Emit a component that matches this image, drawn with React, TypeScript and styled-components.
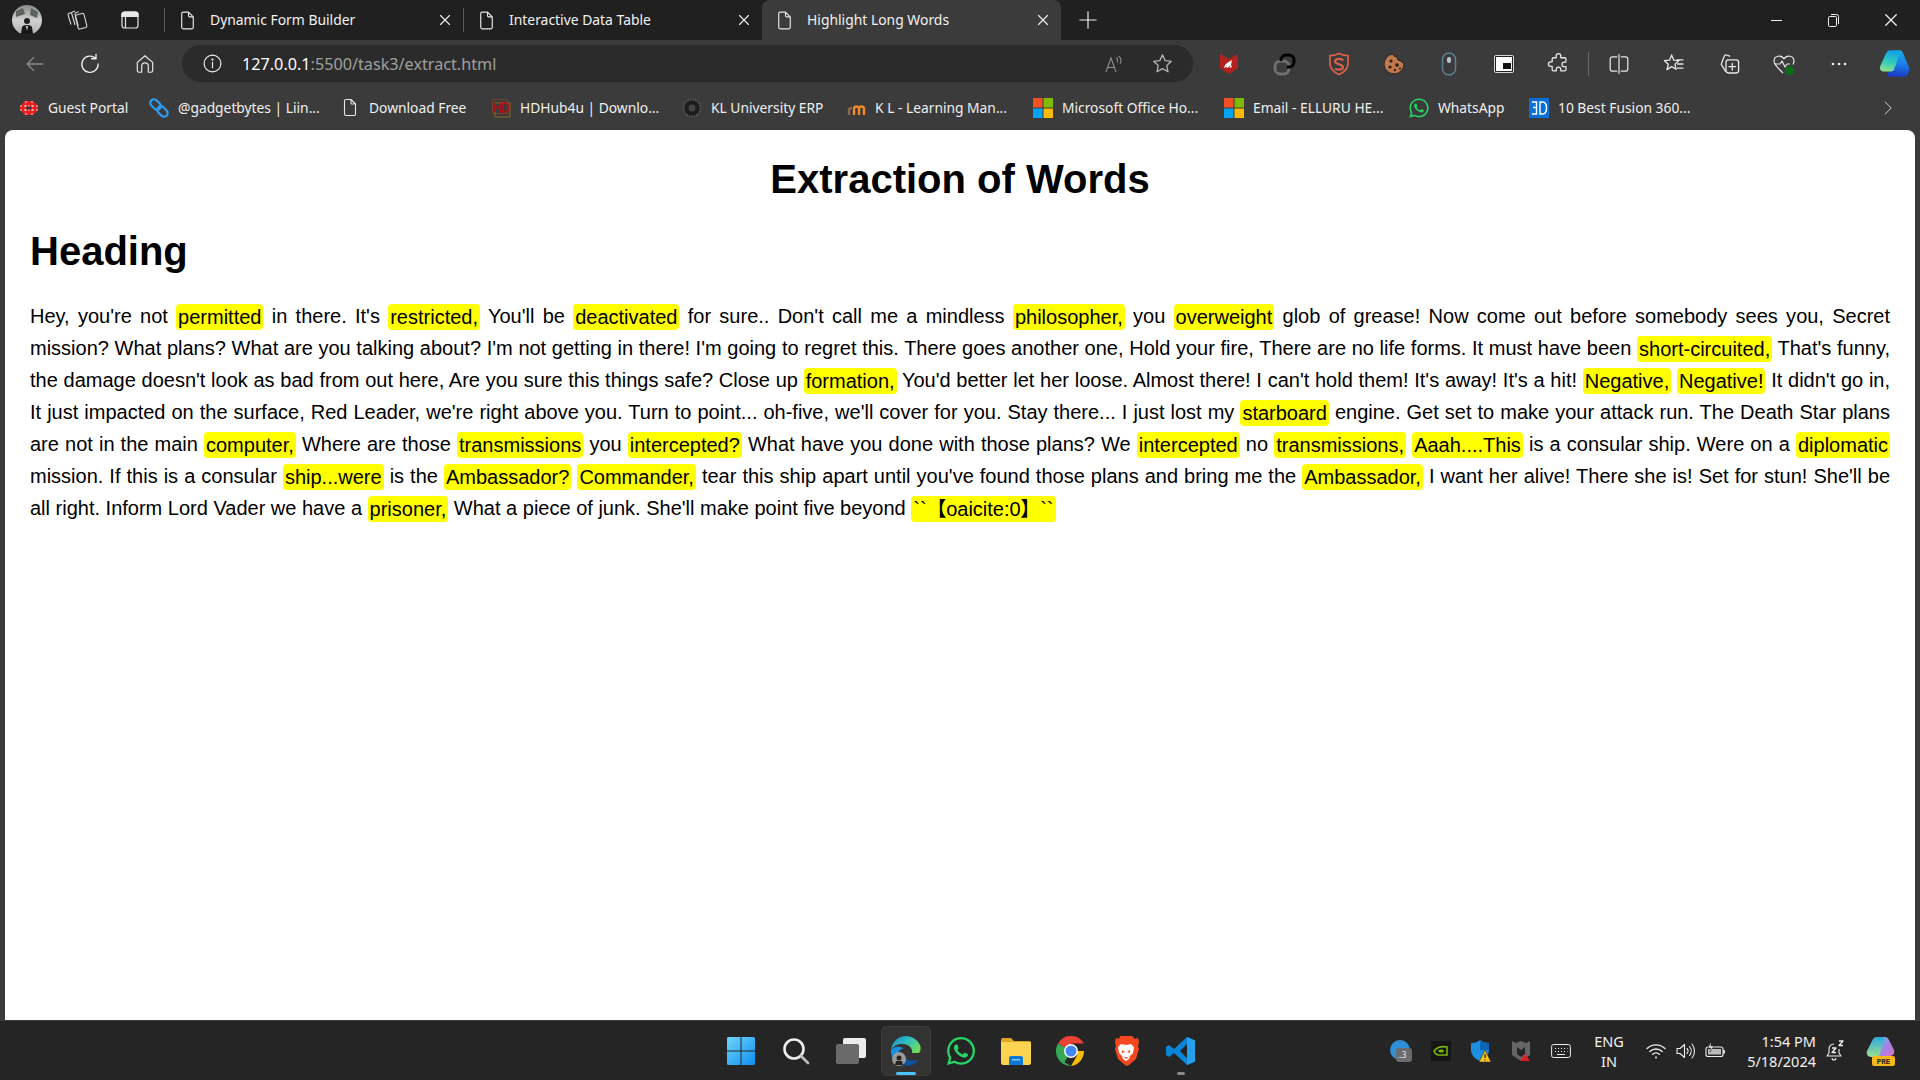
import React from "react";
import styled, { createGlobalStyle } from "styled-components";
import { FaWhatsapp } from "react-icons/fa";

const Global = createGlobalStyle`
  html, body { margin: 0; padding: 0; background: #3b3b3b; }
  #root { width: 1920px; height: 1080px; overflow: hidden; }
`;

const Screen = styled.div`
  display: flex;
  flex-direction: column;
  width: 1920px;
  height: 1080px;
  background: #3b3b3b;
  font-family: "Noto Sans", "Open Sans", sans-serif;
  color: #fff;
`;

const TitleBar = styled.div`
  display: flex;
  align-items: stretch;
  height: 40px;
  background: #202020;
  flex: none;
`;

const Slot = styled.div<{ $w: number }>`
  display: flex;
  align-items: center;
  justify-content: center;
  flex: none;
  width: ${(p) => p.$w}px;
`;

const Divider = styled.div`
  flex: none;
  width: 1px;
  height: 24px;
  margin: 8px 0 0;
  background: #5c5c5c;
`;

const Tab = styled.div<{ $active?: boolean; $w: number }>`
  display: flex;
  align-items: center;
  flex: none;
  width: ${(p) => p.$w}px;
  height: 40px;
  padding: 0 12px;
  box-sizing: border-box;
  background: ${(p) => (p.$active ? "#3b3b3b" : "transparent")};
  border-radius: ${(p) => (p.$active ? "8px 8px 0 0" : "0")};
`;

const TabTitle = styled.span`
  flex: 1;
  margin: 0 0 2px 12px;
  font-size: 13.9px;
  white-space: nowrap;
  color: #f2f2f2;
`;

const Spacer = styled.div`
  flex: 1;
`;

const Toolbar = styled.div`
  display: flex;
  align-items: center;
  flex: none;
  height: 43px;
  padding: 4px 0 0 7px;
  box-sizing: border-box;
`;

const AddressBar = styled.div`
  display: flex;
  align-items: center;
  flex: none;
  width: 1011px;
  height: 37px;
  margin: 0 8px 0 10px;
  padding: 0 6px 0 20px;
  box-sizing: border-box;
  border-radius: 19px;
  background: #2b2b2b;
`;

const Url = styled.div`
  flex: 1;
  margin-left: 19px;
  font-size: 16.2px;
  white-space: nowrap;
  color: #a0a0a0;
`;

const UrlHost = styled.span`
  color: #ffffff;
`;

const ToolSep = styled.div`
  flex: none;
  width: 1px;
  height: 24px;
  margin: 0 2px;
  background: #6a6a6a;
`;

const BookmarkBar = styled.div`
  display: flex;
  align-items: center;
  flex: none;
  height: 47px;
  padding: 2px 0 0 19px;
  box-sizing: border-box;
`;

const Bookmark = styled.div<{ $w: number }>`
  display: flex;
  align-items: center;
  flex: none;
  width: ${(p) => p.$w}px;
  gap: 9px;
  font-size: 13.8px;
  white-space: nowrap;
  color: #f0f0f0;
`;

const BookmarkIcon = styled.div`
  display: flex;
  align-items: center;
  justify-content: center;
  flex: none;
  width: 20px;
  height: 20px;
`;

const Page = styled.main`
  flex: 1;
  min-height: 0;
  margin: 0 5px;
  padding: 26px 25px 0;
  box-sizing: border-box;
  background: #ffffff;
  border-radius: 8px 8px 0 0;
  color: #000;
  font-family: "Liberation Sans", "Noto Sans CJK SC", Arial, sans-serif;
`;

const Title = styled.h1`
  margin: 0 0 26px;
  font-size: 40px;
  line-height: 46px;
  font-weight: 700;
  text-align: center;
`;

const Heading = styled.h2`
  margin: 0 0 26px;
  font-size: 40px;
  line-height: 46px;
  font-weight: 700;
`;

const Body = styled.p`
  margin: 0;
  font-size: 20px;
  line-height: 32px;
  text-align: justify;
`;

const Mark = styled.span`
  padding: 2px;
  background: #ffff00;
  border-radius: 4px;
  line-height: 20px;
  vertical-align: -1px;
  word-spacing: 4px;
  font-feature-settings: "palt";
`;

const Taskbar = styled.footer`
  display: grid;
  grid-template-columns: 1fr auto 1fr;
  flex: none;
  height: 60px;
  background: #252525;
  border-top: 1px solid #3a3a3a;
  box-sizing: border-box;
`;

const TaskCenter = styled.div`
  display: flex;
  align-items: center;
  padding-left: 2px;
`;

const TaskButton = styled.div<{ $active?: boolean }>`
  position: relative;
  display: flex;
  align-items: center;
  justify-content: center;
  flex: none;
  width: 55px;
  height: 50px;
  &::before {
    content: "";
    position: absolute;
    inset: 0 2.5px;
    border-radius: 5px;
    background: ${(p) => (p.$active ? "#333333" : "transparent")};
    border: ${(p) => (p.$active ? "1px solid #3d3d3d" : "none")};
  }
  & > svg {
    position: relative;
  }
`;

const RunDot = styled.div<{ $active?: boolean }>`
  position: absolute;
  left: 50%;
  bottom: 1px;
  width: ${(p) => (p.$active ? 20 : 8)}px;
  height: 3px;
  margin-left: ${(p) => (p.$active ? -10 : -4)}px;
  border-radius: 2px;
  background: ${(p) => (p.$active ? "#4cc2ff" : "#8a8a8a")};
`;

const Tray = styled.div`
  display: flex;
  align-items: center;
  justify-content: flex-end;
  padding-right: 12px;
`;

const Lang = styled.div`
  flex: none;
  width: 56px;
  margin-right: 4px;
  font-size: 14.5px;
  line-height: 20px;
  text-align: center;
  color: #f2f2f2;
`;

const Clock = styled.div`
  flex: none;
  width: 89px;
  padding-right: 4px;
  box-sizing: border-box;
  font-size: 14.5px;
  line-height: 20px;
  text-align: right;
  white-space: nowrap;
  color: #f2f2f2;
`;

type IconProps = { s?: number; c?: string; o?: number };

const Line = ({ s = 20, c = "#fff", o = 1, children }: IconProps & { children: React.ReactNode }) => (
  <svg width={s} height={s} viewBox="0 0 20 20" fill="none" stroke={c} strokeOpacity={o} strokeWidth={1.1} strokeLinecap="round" strokeLinejoin="round">
    {children}
  </svg>
);

const PageIcon = ({ c = "#e8e8e8" }: IconProps) => (
  <Line s={21} c={c}>
    <path d="M4.5 3.5a1.5 1.5 0 0 1 1.5-1.5h5l4.5 4.5v10a1.5 1.5 0 0 1-1.5 1.5H6a1.5 1.5 0 0 1-1.5-1.5zM11 2v3.5a1 1 0 0 0 1 1h3.5" />
  </Line>
);
const CloseIcon = ({ s = 12, c = "#f0f0f0" }: IconProps) => (
  <svg width={s} height={s} viewBox="0 0 12 12" stroke={c} strokeWidth={1.1} strokeLinecap="round"><path d="M1.5 1.5l9 9M10.5 1.5l-9 9" /></svg>
);
const Avatar = () => (
  <svg width={30} height={30} viewBox="0 0 30 30">
    <defs><linearGradient id="av" x1="0" y1="0" x2="0" y2="1"><stop offset="0" stopColor="#858a87" /><stop offset="0.5" stopColor="#d0d2d0" /><stop offset="1" stopColor="#b0b0b0" /></linearGradient></defs>
    <circle cx="15" cy="15" r="15" fill="url(#av)" />
    <path d="M4 6l7-3 2 6-9 3zM19 3l7 4-1 6-7-3z" fill="#5c625e" />
    <circle cx="15" cy="16" r="3" fill="#1f1f1f" />
    <path d="M9 29l1-7q1-2 5-2t5 2l1 7q-6 2-12 0z" fill="#161616" />
    <path d="M14 21h2l-1 5z" fill="#ddd" />
  </svg>
);
const Workspaces = () => (
  <svg width={22} height={22} viewBox="0 0 22 22" fill="none" stroke="#d8d8d8" strokeWidth={1.1} strokeLinejoin="round">
    <path d="M5.500 3.500L2.800 4.600a1.200 1.200 0 0 0-.7 1.500L5 15.500" />
    <path d="M9 2L6.400 3a1.200 1.200 0 0 0-.7 1.500l3.300 11.500" />
    <path d="M12.800 2.800l-2.900.9a1.200 1.200 0 0 0-.8 1.500l3.100 11.800" />
    <rect x="10.500" y="5" width="9" height="14.500" rx="1.500" transform="rotate(-14 15 12)" />
  </svg>
);
const TabsIcon = () => (
  <svg width={20} height={20} viewBox="0 0 20 20" fill="none" stroke="#e8e8e8" strokeWidth={1.2}>
    <rect x="2" y="2" width="16" height="16" rx="2.5" />
    <path d="M2 6.500V4.500A2.500 2.500 0 0 1 4.500 2h11A2.500 2.500 0 0 1 18 4.500v2z" fill="#e8e8e8" />
    <path d="M5.500 6.500V18" />
  </svg>
);
const Minus = () => <svg width={12} height={12} viewBox="0 0 12 12" stroke="#eee"><path d="M0 6.500h11" /></svg>;
const Restore = () => (
  <svg width={14} height={14} viewBox="0 0 14 14" fill="none" stroke="#eee"><rect x="2.500" y="3.500" width="8" height="10" rx="1.200" /><path d="M5 1.500h5.500a2 2 0 0 1 2 2V11" /></svg>
);
const PlusIcon = () => (
  <svg width={20} height={20} viewBox="0 0 20 20" stroke="#eee" strokeWidth={1.2}><path d="M10 1.500v17M1.500 10h17" /></svg>
);
const Back = () => (
  <Line s={24} c="#8a8a8a"><path d="M16.500 10H3.500M9 4.500L3.500 10 9 15.500" /></Line>
);
const Reload = () => (
  <Line s={24} c="#eee"><path d="M14.600 5.200A6.800 6.800 0 1 0 16.800 10M15 2v3.600h-3.600" /></Line>
);
const HomeIcon = () => (
  <Line s={22} c="#e6e6e6"><path d="M3 8.500L10 2.500l7 6V16a1.500 1.500 0 0 1-1.500 1.500H13V12a3 3 0 0 0-6 0v5.500H4.500A1.500 1.500 0 0 1 3 16z" /></Line>
);
const InfoIcon = () => (
  <Line s={21} c="#f0f0f0"><circle cx="10" cy="10" r="8" /><path d="M10 9v5" /><circle cx="10" cy="6.300" r="0.500" fill="#f0f0f0" /></Line>
);
const ReadAloud = () => (
  <svg width={22} height={22} viewBox="0 0 22 22" fill="none" stroke="#8e8e8e" strokeWidth={1.1}>
    <path d="M3 19l5-14 5 14M5 14.500h6" /><path d="M13 4.500c2 1 2 3.500 1 5M15.500 3c3 1.500 3 6 1.500 8" />
  </svg>
);
const StarIcon = () => (
  <Line s={23} c="#b5b5b5"><path d="M10 2.500l2.300 5 5.400.6-4 3.700 1.100 5.400L10 14.500l-4.800 2.700 1.100-5.400-4-3.700 5.400-.6z" /></Line>
);
const ShieldRed = () => (
  <svg width={18} height={22} viewBox="0 0 18 22">
    <path d="M0 1l4.500 2.500L9 6l4.500-2.500L18 1v14l-9 6-9-6z" fill="#b3221e" />
    <path d="M6 14l1-4 5-3-1 5-4 3zM5 12l2-2-1 4-2 1zM11 12l1 2-3 1z" fill="#fff" />
  </svg>
);
const LinkExt = () => (
  <svg width={24} height={24} viewBox="0 0 24 24" fill="none" strokeWidth={3}>
    <rect x="3" y="9" width="14" height="13" rx="5.500" stroke="#6f6f6f" />
    <path d="M9 9V8a5 5 0 0 1 5-5h3a5 5 0 0 1 5 5v2a5 5 0 0 1-5 5h-2" stroke="#000" />
  </svg>
);
const SShield = () => (
  <svg width={22} height={24} viewBox="0 0 22 24" fill="none" stroke="#d9604a">
    <path d="M11 1.500c3 1.600 6 2.200 9 2.200v8c0 5-4 8.500-9 10.800-5-2.300-9-5.800-9-10.800v-8c3 0 6-.6 9-2.200z" strokeWidth={1.800} />
    <path d="M15.500 8.500C13 6 7 6.500 7 9.500s8 2.500 8 5.500-5.500 3.500-8 1.500" strokeWidth={2.200} />
  </svg>
);
const Cookie = () => (
  <svg width={22} height={22} viewBox="0 0 22 22">
    <path d="M10 1a4 4 0 0 0 4 3 4 4 0 0 0 4 4 3 3 0 0 0 3 2 10 10 0 1 1-11-9z" fill="#c17a4b" stroke="#222" />
    <circle cx="8" cy="8" r="1.600" fill="#2a1c12" /><circle cx="14" cy="12" r="1.800" fill="#2a1c12" /><circle cx="7" cy="14" r="1.600" fill="#2a1c12" /><circle cx="12" cy="17" r="1.200" fill="#2a1c12" /><circle cx="17" cy="15.500" r="1" fill="#2a1c12" />
  </svg>
);
const MouseExt = () => (
  <svg width={16} height={24} viewBox="0 0 16 24" fill="none">
    <rect x="1.500" y="1" width="13" height="22" rx="6.500" stroke="#5a7f93" strokeWidth={1.500} />
    <rect x="6" y="5" width="4" height="6" rx="2" fill="#b6c3ca" />
  </svg>
);
const Pip = () => (
  <svg width={20} height={18} viewBox="0 0 20 18">
    <rect x="0.500" y="0.500" width="19" height="17" rx="1.500" fill="#222" stroke="#d8d8d8" />
    <rect x="2" y="2" width="16" height="14" fill="#fff" />
    <rect x="9" y="8" width="8" height="6" fill="#111" />
  </svg>
);
const Puzzle = () => (
  <Line s={23} c="#e8e8e8"><path d="M8 3.500a2 2 0 0 1 4 0V5h3.500a1 1 0 0 1 1 1v2.800H15a2 2 0 0 0 0 4h1.500v2.700a1 1 0 0 1-1 1H12v-1.300a2 2 0 0 0-4 0v1.300H5.500a1 1 0 0 1-1-1V12.500H3.200a2 2 0 0 1 0-4h1.300V6a1 1 0 0 1 1-1H8z" /></Line>
);
const Split = () => (
  <Line s={22} c="#e8e8e8"><path d="M8 3.500H4a2 2 0 0 0-2 2v9a2 2 0 0 0 2 2h4M12 3.500h4a2 2 0 0 1 2 2v9a2 2 0 0 1-2 2h-4M10 1.500v17" /></Line>
);
const Favs = () => (
  <Line s={24} c="#e8e8e8"><path d="M8 2.500l1.800 4.300 4.200.4-3.200 2.900 1 4.300L8 12.200l-3.900 2.500 1.200-4.500L2 7.200l4.300-.4zM13 6.500h4.500M13 10h4.500M13 13.500h4.500" /></Line>
);
const Collections = () => (
  <Line s={24} c="#e8e8e8"><path d="M10.500 3.500L8 2.500a1.500 1.500 0 0 0-2 1L3.700 9.500a1.500 1.500 0 0 0 .5 1.800L7 16" /><rect x="7.500" y="6.500" width="10.500" height="11" rx="2" /><path d="M12.700 9.500v5.500M10 12.200h5.500" /></Line>
);
const Health = () => (
  <svg width={24} height={24} viewBox="0 0 24 24" fill="none" stroke="#e8e8e8" strokeWidth={1.200} strokeLinejoin="round">
    <path d="M12 7c-3-5-10-3-10 2 0 3 3 6 6 9l3 3M12 7c3-5 10-3 10 2 0 1.500-.5 2.500-1 3.500" />
    <path d="M2.500 12H8l2-3 3 6 2-3h3" />
    <circle cx="17.500" cy="18.500" r="4.500" fill="#0c6e1a" stroke="none" />
  </svg>
);
const Dots = () => (
  <svg width={18} height={4} viewBox="0 0 18 4" fill="#eee"><circle cx="3" cy="2" r="1.300" /><circle cx="9" cy="2" r="1.300" /><circle cx="15" cy="2" r="1.300" /></svg>
);
const Copilot = ({ s = 30, id = "cp" }: { s?: number; id?: string }) => (
  <svg width={s} height={s} viewBox="0 0 30 30">
    <defs>
      <linearGradient id={`${id}a`} x1="0.500" y1="0" x2="0.300" y2="1"><stop offset="0" stopColor="#10a0e8" /><stop offset="0.500" stopColor="#2fc8c0" /><stop offset="1" stopColor="#8fe090" /></linearGradient>
      <linearGradient id={`${id}b`} x1="0.500" y1="0" x2="0.400" y2="1"><stop offset="0" stopColor="#12aee8" /><stop offset="0.550" stopColor="#1d78e6" /><stop offset="1" stopColor="#1a35c0" /></linearGradient>
    </defs>
    <path d="M16 2h4c2 0 3 1 3.500 3L29 18c1 3-1 9-5 9H10c-1 0-2-1-1-3l3-4L18 8c.5-2-.5-4-2-6z" fill={`url(#${id}b)`} />
    <path d="M18 2h-6c-3 0-4 2-5 4L2 17c-1 3 1 5 4 5h6c2 0 3-1 3.500-3L20 6c.5-2 0-4-2-4z" fill={`url(#${id}a)`} />
  </svg>
);
const Redgrid = () => (
  <svg width={20} height={20} viewBox="0 0 20 20">
    <path d="M6 3h8l5 5v4l-5 5H6L1 12V8z" fill="#e81f1f" />
    <path d="M7 3v14M13 3v14M1 8h18M1 12h18" stroke="#fff" strokeWidth={0.800} strokeDasharray="2 2" />
    <rect x="7.500" y="8.500" width="5" height="3" fill="#3b3b3b" />
  </svg>
);
const Chain = () => (
  <svg width={22} height={22} viewBox="0 0 22 22" fill="none" stroke="#2e9bf0" strokeWidth={2.400}>
    <rect x="-6.500" y="-4" width="13" height="8" rx="4" transform="translate(7.200 7.200) rotate(45)" />
    <rect x="-6.500" y="-4" width="13" height="8" rx="4" transform="translate(14.800 14.800) rotate(45)" />
  </svg>
);
const HdLogo = () => (
  <svg width={20} height={20} viewBox="0 0 20 20">
    <rect x="1.500" y="1.500" width="15" height="14" fill="none" stroke="#6e4630" />
    <rect x="4" y="5" width="15" height="14" fill="none" stroke="#8a6a2a" />
    <path d="M4 5v9M9 5v9M4 9.500h5M12 5v9h2.500q3 0 3-4.500T14.500 5z" fill="none" stroke="#b0121a" strokeWidth={1.800} />
  </svg>
);
const KlSeal = () => (
  <svg width={20} height={20} viewBox="0 0 20 20">
    <circle cx="10" cy="10" r="8.500" fill="#1d1d1d" stroke="#555" strokeDasharray="1.500 1" strokeWidth={2} />
    <circle cx="10" cy="10" r="3.500" fill="#444" />
  </svg>
);
const Moodle = () => (
  <svg width={20} height={20} viewBox="0 0 20 20" fill="none" strokeWidth={2.400}>
    <path d="M8 17v-6a2.500 2.500 0 0 1 5 0v6M13 11a2.500 2.500 0 0 1 5 0v6" stroke="#f28a22" />
    <path d="M3 17v-5q0-2 3-2" stroke="#8a6a4a" />
  </svg>
);
const Ms = () => (
  <svg width={20} height={20} viewBox="0 0 20 20">
    <rect x="0" y="0" width="9.500" height="9.500" fill="#f25022" /><rect x="10.500" y="0" width="9.500" height="9.500" fill="#7fba00" />
    <rect x="0" y="10.500" width="9.500" height="9.500" fill="#00a4ef" /><rect x="10.500" y="10.500" width="9.500" height="9.500" fill="#ffb900" />
  </svg>
);
const ThreeD = () => (
  <svg width={20} height={20} viewBox="0 0 20 20" fill="none">
    <rect width="20" height="20" fill="#0a6fd8" />
    <path d="M3 4h4.500v5.500H4M7.500 9.500V16H3M11 4v12h2.500q4 0 4-6t-4-6z" stroke="#fff" strokeWidth={1.400} />
  </svg>
);
const Chevron = () => (
  <Line s={16} c="#e0e0e0"><path d="M6.500 2.500L14 10l-7.500 7.500" /></Line>
);

const WinLogo = () => (
  <svg width={30} height={30} viewBox="0 0 30 30">
    <defs><linearGradient id="win" x1="0" y1="0" x2="1" y2="1"><stop offset="0" stopColor="#6fd5fb" /><stop offset="1" stopColor="#0f8ef0" /></linearGradient></defs>
    <path d="M1 2.500A1.500 1.500 0 0 1 2.500 1h12v13.500H1zM15.500 1h12A1.500 1.500 0 0 1 29 2.500v12H15.500zM1 15.500h13.500V29h-12A1.500 1.500 0 0 1 1 27.500zM15.500 15.500H29v12a1.500 1.500 0 0 1-1.500 1.500h-12z" fill="url(#win)" />
  </svg>
);
const SearchIcon = () => (
  <svg width={28} height={28} viewBox="0 0 28 28" fill="none" stroke="#ececec" strokeWidth={2.600} strokeLinecap="round">
    <circle cx="12" cy="12" r="9.500" /><path d="M19 19l7 7" stroke="#bdbdbd" />
  </svg>
);
const TaskView = () => (
  <svg width={30} height={28} viewBox="0 0 30 28">
    <rect x="7" y="1" width="23" height="20" rx="2" fill="#ececec" />
    <rect x="0" y="7" width="23" height="20" rx="2" fill="#6a6a6a" />
  </svg>
);
const Edge = () => (
  <svg width={30} height={30} viewBox="0 0 30 30">
    <defs>
      <linearGradient id="e1" x1="0" y1="0" x2="1" y2="0.700"><stop offset="0" stopColor="#0f7fc8" /><stop offset="0.500" stopColor="#2fc1c0" /><stop offset="1" stopColor="#6fdc5c" /></linearGradient>
    </defs>
    <path d="M15 0C7 0 1 6 0 14c3-5 8-7 13-6 6 1 9 5 8 9h7c2-2 2-6 1-8-2-5-8-9-14-9z" fill="url(#e1)" />
    <path d="M0 14c-.5 7 4 14 12 15.500-4-3-6-7-5-12 .5-3 3-5 6-5-5-3-10-2-13 1.500z" fill="#1490df" />
    <path d="M12 29.500c6 1.500 13-1 16-6.500-4 2-11 3-15-2-1.500 3-1 6 2 8.500z" fill="#0b55a5" />
    <circle cx="8" cy="23" r="7" fill="#9a9a9a" /><circle cx="8" cy="22" r="2.500" fill="#222" /><path d="M4 29l1-4h6l1 4z" fill="#222" />
  </svg>
);
const Folder = () => (
  <svg width={30} height={28} viewBox="0 0 30 28">
    <path d="M0 3a2 2 0 0 1 2-2h8l3 3h15a2 2 0 0 1 2 2v4H0z" fill="#e0a420" />
    <path d="M0 5h30v21a2 2 0 0 1-2 2H2a2 2 0 0 1-2-2z" fill="#fdd44f" />
    <path d="M8 28v-7a2 2 0 0 1 2-2h10a2 2 0 0 1 2 2v7z" fill="#0a78d4" />
    <rect x="11" y="22" width="8" height="1.500" fill="#7ec8f5" />
  </svg>
);
const Chrome = () => (
  <svg width={30} height={30} viewBox="0 0 30 30">
    <path d="M15 15L2 7.500A15 15 0 0 1 28 7.500H15z" fill="#ea4335" />
    <path d="M15 15H28A15 15 0 0 1 15 30l6.500-11.250z" fill="#fbbc04" />
    <path d="M15 15l-6.500 11.250L15 30A15 15 0 0 1 2 7.500z" fill="#34a853" />
    <circle cx="15" cy="15" r="7" fill="#fff" /><circle cx="15" cy="15" r="5.500" fill="#4285f4" />
  </svg>
);
const Brave = () => (
  <svg width={26} height={30} viewBox="0 0 26 30">
    <path d="M7 0h12l3 3 3-1 1 4-1 4 1 3-3 10-7 6-2 1-2-1-7-6L2 13l1-3-1-4 1-4 3 1z" fill="#f5481f" />
    <path d="M13 9l5-1 3 3-1 6-3 3-1 3-3 2-3-2-1-3-3-3-1-6 3-3z" fill="#fff" />
    <path d="M9 14l3 2-3 1zM17 14l-3 2 3 1zM11 21h4l-2 2z" fill="#f5481f" />
  </svg>
);
const VsCode = () => (
  <svg width={30} height={30} viewBox="0 0 30 30">
    <path d="M21 1l8 3.500v21L21 29 8 17l-5 4-3-2v-8l3-2 5 4zM21 8l-7 7 7 7z" fill="#0a84d6" fillRule="evenodd" />
    <path d="M21 1l8 3.500v21L21 29z" fill="#24a1ed" />
  </svg>
);
const Globe = () => (
  <svg width={22} height={22} viewBox="0 0 22 22">
    <circle cx="10" cy="10" r="10" fill="#2f8fd8" />
    <rect x="6" y="8" width="16" height="14" rx="3" fill="#6b6b6b" />
    <text x="7.500" y="18" fontSize="8" fontFamily="Noto Sans" fill="#eee">..3</text>
  </svg>
);
const Nvidia = () => (
  <svg width={20} height={20} viewBox="0 0 20 20" fill="none">
    <rect width="20" height="20" fill="#161616" />
    <path d="M3 10c3-4 8-5 13-4v8H8c-2 0-4-1-5-4z" stroke="#7ab800" strokeWidth={1.600} />
    <path d="M7 10c2-2 5-2 6 0-1 2-4 2-6 0z" fill="#7ab800" />
  </svg>
);
const Defender = () => (
  <svg width={20} height={22} viewBox="0 0 20 22">
    <path d="M9 0c2 2 5 3 9 3v7c0 5-4 9-9 11-5-2-9-6-9-11V3c4 0 7-1 9-3z" fill="#1c8fe0" />
    <path d="M9 0c2 2 5 3 9 3v7H9z" fill="#0b64b4" />
    <path d="M14 10l6 12H8z" fill="#fcc419" stroke="#222" strokeWidth={0.500} />
    <path d="M14 14v4M14 19.500v1" stroke="#222" strokeWidth={1.200} />
  </svg>
);
const McAfee = () => (
  <svg width={20} height={22} viewBox="0 0 20 22">
    <path d="M1 1l4 2 5-2 5 2 4-2v14l-9 6-9-6z" fill="#666" />
    <path d="M6 7v7l4 3 4-3V7l-4 3z" fill="#252525" />
    <path d="M14 14l5 7H9z" fill="#e02020" />
  </svg>
);
const Keyboard = () => (
  <svg width={20} height={16} viewBox="0 0 20 16" fill="none" stroke="#eee">
    <rect x="0.600" y="1.500" width="18.800" height="13" rx="2" />
    <path d="M4 5.500h1M7 5.500h1M10 5.500h1M13 5.500h1M16 5.500h.5M4 8.500h1M7 8.500h1M10 8.500h1M13 8.500h1M16 8.500h.5M6 11.500h8" />
  </svg>
);
const WifiIcon = () => (
  <svg width={20} height={18} viewBox="0 0 20 18" fill="none" stroke="#eee" strokeWidth={1.300} strokeLinecap="round">
    <path d="M1 6.500a13 13 0 0 1 18 0M3.800 9.500a9 9 0 0 1 12.400 0M6.600 12.300a5 5 0 0 1 6.800 0" /><circle cx="10" cy="15.500" r="1" fill="#eee" stroke="none" />
  </svg>
);
const Volume = () => (
  <svg width={20} height={18} viewBox="0 0 20 18" fill="none" stroke="#eee" strokeWidth={1.100} strokeLinejoin="round" strokeLinecap="round">
    <path d="M1 6.500h3L8.500 2.500v13L4 11.500H1zM11 6.500a3.500 3.500 0 0 1 0 5M13.500 4.500a7 7 0 0 1 0 9M16 2a11 11 0 0 1 0 14" />
  </svg>
);
const Battery = () => (
  <svg width={22} height={18} viewBox="0 0 22 18" fill="none" stroke="#eee" strokeWidth={1.100}>
    <rect x="1" y="5" width="17" height="9.500" rx="2" /><rect x="3" y="7" width="13" height="5.500" fill="#bbb" stroke="none" /><path d="M19 8v3.500" strokeWidth={1.800} />
    <path d="M6 0L3 6h3l-1 4 4-6H6z" fill="#eee" stroke="#252525" strokeWidth={0.500} />
  </svg>
);
const Bell = () => (
  <svg width={20} height={22} viewBox="0 0 20 22" fill="none" stroke="#eee" strokeWidth={1.100} strokeLinejoin="round">
    <path d="M8 4a5 5 0 0 0-5 5v4l-2 3h14l-2-3V9M6 18a2 2 0 0 0 4 0" />
    <path d="M6 8h4l-4 4.500h4M13 1h4l-4 4.500h4" strokeWidth={1.300} />
  </svg>
);
const CopilotPre = () => (
  <svg width={30} height={30} viewBox="0 0 30 30">
    <defs><linearGradient id="pr" x1="0" y1="0" x2="1" y2="1"><stop offset="0" stopColor="#4dc8e8" /><stop offset="0.500" stopColor="#a084e8" /><stop offset="1" stopColor="#e070c8" /></linearGradient>
    <linearGradient id="pr2" x1="0" y1="0" x2="0" y2="1"><stop offset="0" stopColor="#2aa8e0" /><stop offset="1" stopColor="#9be08c" /></linearGradient></defs>
    <path d="M12 1h8c2 0 3 1 4 3l5 10c1 3-1 6-4 6H14z" fill="url(#pr)" />
    <path d="M17 1h-5c-3 0-4 2-5 4L2 15c-1 3 1 6 4 6h5c2 0 3-1 4-3l4-13c.5-2 0-4-2-4z" fill="url(#pr2)" />
    <rect x="7" y="20" width="23" height="10" rx="2" fill="#f6b81c" />
    <text x="18.500" y="27.800" textAnchor="middle" fontSize="7.500" fontWeight="700" fontFamily="Liberation Mono" fill="#222">PRE</text>
  </svg>
);

const tabs = [
  { w: 298, title: "Dynamic Form Builder" },
  { w: 298, title: "Interactive Data Table" },
  { w: 299, title: "Highlight Long Words", active: true },
];

const bookmarks: { w: number; icon: React.ReactNode; label: string }[] = [
  { w: 130, icon: <Redgrid />, label: "Guest Portal" },
  { w: 191, icon: <Chain />, label: "@gadgetbytes | Liin..." },
  { w: 151, icon: <PageIcon />, label: "Download Free" },
  { w: 191, icon: <HdLogo />, label: "HDHub4u | Downlo..." },
  { w: 164, icon: <KlSeal />, label: "KL University ERP" },
  { w: 187, icon: <Moodle />, label: "K L - Learning Man..." },
  { w: 191, icon: <Ms />, label: "Microsoft Office Ho..." },
  { w: 185, icon: <Ms />, label: "Email - ELLURU HE..." },
  { w: 120, icon: <FaWhatsapp size={22} color="#25d366" />, label: "WhatsApp" },
  { w: 200, icon: <ThreeD />, label: "10 Best Fusion 360..." },
];

const paragraph =
  "Hey, you're not [permitted] in there. It's [restricted,] You'll be [deactivated] for sure.. Don't call me a mindless [philosopher,] you [overweight] glob of grease! Now come out before somebody sees you, Secret mission? What plans? What are you talking about? I'm not getting in there! I'm going to regret this. There goes another one, Hold your fire, There are no life forms. It must have been [short-circuited,] That's funny, the damage doesn't look as bad from out here, Are you sure this things safe? Close up [formation,] You'd better let her loose. Almost there! I can't hold them! It's away! It's a hit! [Negative,] [Negative!] It didn't go in, It just impacted on the surface, Red Leader, we're right above you. Turn to point... oh-five, we'll cover for you. Stay there... I just lost my [starboard] engine. Get set to make your attack run. The Death Star plans are not in the main [computer,] Where are those [transmissions] you [intercepted?] What have you done with those plans? We [intercepted] no [transmissions,] [Aaah....This] is a consular ship. Were on a [diplomatic] mission. If this is a consular [ship...were] is the [Ambassador?] [Commander,] tear this ship apart until you've found those plans and bring me the [Ambassador,] I want her alive! There she is! Set for stun! She'll be all right. Inform Lord Vader we have a [prisoner,] What a piece of junk. She'll make point five beyond [`` 【oaicite:0】 ``]";

const segments = paragraph.split(/(\[[^\]]+\])/).filter(Boolean);

export default function App() {
  return (
    <Screen>
      <Global />
      <TitleBar>
        <Slot $w={54}><Avatar /></Slot>
        <Slot $w={46}><Workspaces /></Slot>
        <Slot $w={60}><TabsIcon /></Slot>
        <Slot $w={4} />
        <Divider />
        {tabs.map((t, i) => (
          <React.Fragment key={t.title}>
            <Tab $w={t.w} $active={t.active}>
              <PageIcon />
              <TabTitle>{t.title}</TabTitle>
              <CloseIcon />
            </Tab>
            {i === 0 && <Divider />}
          </React.Fragment>
        ))}
        <Slot $w={54}><PlusIcon /></Slot>
        <Spacer />
        <Slot $w={54}><Minus /></Slot>
        <Slot $w={58}><Restore /></Slot>
        <Slot $w={58}><CloseIcon s={14} /></Slot>
      </TitleBar>
      <Toolbar>
        <Slot $w={55}><Back /></Slot>
        <Slot $w={55}><Reload /></Slot>
        <Slot $w={55}><HomeIcon /></Slot>
        <AddressBar>
          <InfoIcon />
          <Url><UrlHost>127.0.0.1</UrlHost>:5500/task3/extract.html</Url>
          <Slot $w={49}><ReadAloud /></Slot>
          <Slot $w={49}><StarIcon /></Slot>
        </AddressBar>
        <Slot $w={55}><ShieldRed /></Slot>
        <Slot $w={55}><LinkExt /></Slot>
        <Slot $w={55}><SShield /></Slot>
        <Slot $w={55}><Cookie /></Slot>
        <Slot $w={55}><MouseExt /></Slot>
        <Slot $w={55}><Pip /></Slot>
        <Slot $w={55}><Puzzle /></Slot>
        <ToolSep />
        <Slot $w={55}><Split /></Slot>
        <Slot $w={55}><Favs /></Slot>
        <Slot $w={55}><Collections /></Slot>
        <Slot $w={55}><Health /></Slot>
        <Slot $w={55}><Dots /></Slot>
        <Slot $w={55}><Copilot s={32} /></Slot>
      </Toolbar>
      <BookmarkBar>
        {bookmarks.map((b) => (
          <Bookmark key={b.label + b.w} $w={b.w}>
            <BookmarkIcon>{b.icon}</BookmarkIcon>
            {b.label}
          </Bookmark>
        ))}
        <Spacer />
        <Slot $w={64}><Chevron /></Slot>
      </BookmarkBar>
      <Page>
        <Title>Extraction of Words</Title>
        <Heading>Heading</Heading>
        <Body>
          {segments.map((s, i) =>
            s.startsWith("[") ? <Mark key={i}>{s.slice(1, -1)}</Mark> : <React.Fragment key={i}>{s}</React.Fragment>
          )}
        </Body>
      </Page>
      <Taskbar>
        <div />
        <TaskCenter>
          <TaskButton><WinLogo /></TaskButton>
          <TaskButton><SearchIcon /></TaskButton>
          <TaskButton><TaskView /></TaskButton>
          <TaskButton $active><Edge /><RunDot $active /></TaskButton>
          <TaskButton><FaWhatsapp size={32} color="#25d366" /></TaskButton>
          <TaskButton><Folder /></TaskButton>
          <TaskButton><Chrome /></TaskButton>
          <TaskButton><Brave /></TaskButton>
          <TaskButton><VsCode /><RunDot /></TaskButton>
        </TaskCenter>
        <Tray>
          <Slot $w={40}><Globe /></Slot>
          <Slot $w={40}><Nvidia /></Slot>
          <Slot $w={40}><Defender /></Slot>
          <Slot $w={40}><McAfee /></Slot>
          <Slot $w={40}><Keyboard /></Slot>
          <Lang>ENG<br />IN</Lang>
          <Slot $w={30}><WifiIcon /></Slot>
          <Slot $w={30}><Volume /></Slot>
          <Slot $w={30}><Battery /></Slot>
          <Clock>1:54 PM<br />5/18/2024</Clock>
          <Slot $w={32}><Bell /></Slot>
          <Slot $w={56}><CopilotPre /></Slot>
        </Tray>
      </Taskbar>
    </Screen>
  );
}
